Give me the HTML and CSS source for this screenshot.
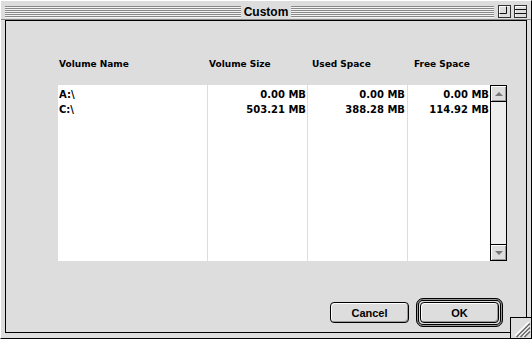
FILE: index.html
```html
<!DOCTYPE html>
<html lang="en">
<head>
    <meta charset="UTF-8">
    <title>Custom</title>
    <link rel="stylesheet" href="styles.css">
</head>
<body>
    <div class="window">
        <div class="titlebar">
            <div class="stripes"></div>
            <div class="title">Custom</div>
            <div class="title-right">
                <div class="stripes"></div>
                <span class="wbox">
                    <svg width="13" height="13" viewBox="0 0 13 13">
                        <rect x="0.5" y="0.5" width="12" height="12" fill="#ddd" stroke="#333"/>
                        <path d="M1.5 11.5V1.5H11.5" fill="none" stroke="#fff"/>
                        <path d="M8.5 1.5V8.5H1.5" fill="none" stroke="#111"/>
                    </svg>
                </span>
                <span class="wbox">
                    <svg width="13" height="13" viewBox="0 0 13 13">
                        <rect x="0.5" y="0.5" width="12" height="12" fill="#ddd" stroke="#333"/>
                        <path d="M1.5 11.5V1.5H11.5" fill="none" stroke="#fff"/>
                        <path d="M1 4.5H12M1 8.5H12" fill="none" stroke="#111"/>
                    </svg>
                </span>
            </div>
        </div>

        <div class="frame">
            <div class="panel">
                <div class="heads">
                    <span>Volume Name</span>
                    <span>Volume Size</span>
                    <span>Used Space</span>
                    <span>Free Space</span>
                </div>

                <div class="list">
                    <div class="col c-name">
                        <div class="cell">A:\</div>
                        <div class="cell">C:\</div>
                    </div>
                    <div class="col c-size num">
                        <div class="cell">0.00 MB</div>
                        <div class="cell">503.21 MB</div>
                    </div>
                    <div class="col c-used num">
                        <div class="cell">0.00 MB</div>
                        <div class="cell">388.28 MB</div>
                    </div>
                    <div class="col c-free num">
                        <div class="cell">0.00 MB</div>
                        <div class="cell">114.92 MB</div>
                    </div>
                    <div class="scroll">
                        <div class="arrow up"><span></span></div>
                        <div class="track"></div>
                        <div class="arrow down"><span></span></div>
                    </div>
                </div>

                <div class="buttons">
                    <button class="btn">Cancel</button>
                    <div class="ring"><button class="btn">OK</button></div>
                </div>
            </div>
        </div>

        <div class="grip">
            <svg width="20" height="20" viewBox="0 0 20 20">
                <path d="M4 18L18 4M8 18L18 8M12 18L18 12" stroke="#fff" stroke-width="1.5"/>
                <path d="M5.5 19L19 5.5M9.5 19L19 9.5M13.5 19L19 13.5" stroke="#666" stroke-width="1.5"/>
            </svg>
        </div>
    </div>
</body>
</html>
```

FILE: styles.css
```css
body { margin: 0; background: #ddd; font-family: "DejaVu Sans", sans-serif; font-weight: bold; color: #000; }

.window { position: relative; box-sizing: border-box; width: 532px; height: 339px; display: flex; flex-direction: column; background: #ddd; border: 1px solid; border-color: #fff #000 #000 #fff; }

/* title bar */
.titlebar { display: grid; grid-template-columns: 1fr auto 1fr; align-items: center; height: 19px; padding: 3px 4px 0 4px; box-sizing: border-box; border-bottom: 1px solid #888; }
.stripes { height: 12px; background: repeating-linear-gradient(to bottom, #888 0 1px, #f4f4f4 1px 2px); }
.title { font-family: "Liberation Sans", sans-serif; font-size: 12px; line-height: 12px; padding: 0 3px; }
.title-right { display: flex; align-items: center; }
.title-right .stripes { flex: 1; margin-right: 4px; }
.wbox { display: block; width: 13px; height: 13px; margin-left: 3px; }
.wbox:first-of-type { margin-left: 0; }
.wbox svg { display: block; }

/* content */
.frame { flex: 1; display: flex; padding: 0 4px 5px 4px; }
.panel { flex: 1; border: 1px solid #000; padding: 36px 19px 0 52px; display: flex; flex-direction: column; }

.heads { display: grid; grid-template-columns: 150px 103px 102px auto; padding-left: 1px; font-size: 9px; line-height: 14px; }

.list { display: flex; height: 176px; margin-top: 14px; background: #fff; font-size: 10px; }
.col { box-sizing: border-box; padding-top: 2px; border-right: 1px solid #ddd; }
.c-name { width: 150px; padding-left: 1px; }
.c-size, .c-used { width: 100px; }
.c-free { width: 82px; border-right: none; }
.num { text-align: right; padding-right: 1px; }
.c-used { padding-right: 2px; }
.cell { height: 15px; line-height: 15px; white-space: nowrap; }

.scroll { box-sizing: border-box; width: 17px; border: 1px solid #000; background: #eee; display: flex; flex-direction: column; }
.track { flex: 1; }
.arrow { height: 15px; background: #ddd; box-shadow: inset 1px 1px #fff, inset -1px -1px #999; display: flex; align-items: center; justify-content: center; }
.arrow.up { border-bottom: 1px solid #000; }
.arrow.down { border-top: 1px solid #000; }
.arrow span { width: 0; height: 0; border-left: 4px solid transparent; border-right: 4px solid transparent; }
.arrow.up span { border-bottom: 4px solid #777; }
.arrow.down span { border-top: 4px solid #777; }

/* buttons */
.buttons { display: flex; justify-content: flex-end; align-items: center; gap: 7px; margin-top: 37px; margin-right: 4px; }
.btn { box-sizing: border-box; width: 79px; height: 21px; padding: 0; border: 1px solid #000; border-radius: 4px; background: #ddd; box-shadow: inset 1px 1px #fff, inset -1px -1px #999; font-family: "Liberation Sans", sans-serif; font-weight: bold; font-size: 11px; color: #000; }
.ring { display: flex; padding: 3px; border: 1px solid #000; border-radius: 7px; box-shadow: inset 0 0 0 1px #999, inset 0 0 0 2px #000; }

/* grow box, lies over the frame corner */
.grip { position: absolute; right: 0; bottom: 0; width: 21px; height: 21px; box-sizing: border-box; background: #ddd; border-top: 1px solid #000; border-left: 1px solid #000; }
.grip svg { display: block; }
```
